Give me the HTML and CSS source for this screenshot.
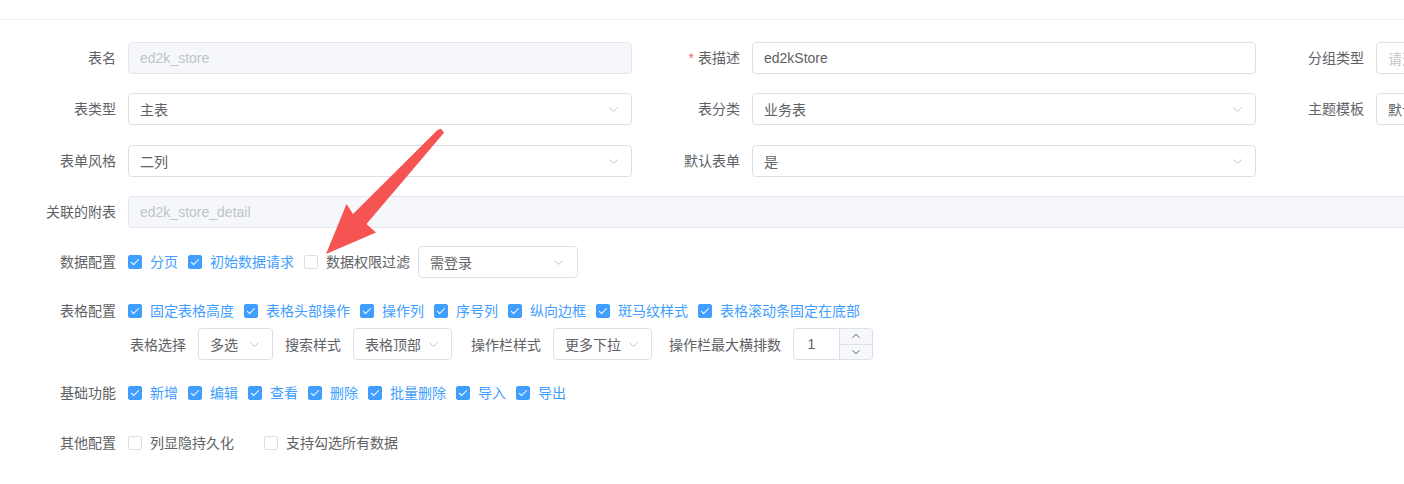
FILE: index.html
```html
<!DOCTYPE html>
<html lang="zh-CN">
<head>
<meta charset="utf-8">
<title>表单配置</title>
<link rel="stylesheet" href="styles.css">
</head>
<body>
<div class="page">
  <div class="topbar"></div>
  <div class="form">
    <div class="grid">
      <div class="item"><label class="lbl">表名</label><div class="ctl disabled">ed2k_store</div></div>
      <div class="item"><label class="lbl"><span class="req">*</span>表描述</label><div class="ctl">ed2kStore</div></div>
      <div class="item"><label class="lbl">分组类型</label><div class="ctl select"><span class="val placeholder">请选择分组类型</span><svg class="chev" viewBox="0 0 9 5"><path d="M0.4 0.4 L4.5 4.5 L8.6 0.4" fill="none" stroke="#c0c4cc" stroke-width="1"/></svg></div></div>

      <div class="item"><label class="lbl">表类型</label><div class="ctl select"><span class="val">主表</span><svg class="chev" viewBox="0 0 9 5"><path d="M0.4 0.4 L4.5 4.5 L8.6 0.4" fill="none" stroke="#c0c4cc" stroke-width="1"/></svg></div></div>
      <div class="item"><label class="lbl">表分类</label><div class="ctl select"><span class="val">业务表</span><svg class="chev" viewBox="0 0 9 5"><path d="M0.4 0.4 L4.5 4.5 L8.6 0.4" fill="none" stroke="#c0c4cc" stroke-width="1"/></svg></div></div>
      <div class="item"><label class="lbl">主题模板</label><div class="ctl select"><span class="val">默认主题模板</span><svg class="chev" viewBox="0 0 9 5"><path d="M0.4 0.4 L4.5 4.5 L8.6 0.4" fill="none" stroke="#c0c4cc" stroke-width="1"/></svg></div></div>

      <div class="item r3"><label class="lbl">表单风格</label><div class="ctl select"><span class="val">二列</span><svg class="chev" viewBox="0 0 9 5"><path d="M0.4 0.4 L4.5 4.5 L8.6 0.4" fill="none" stroke="#c0c4cc" stroke-width="1"/></svg></div></div>
      <div class="item r3"><label class="lbl">默认表单</label><div class="ctl select"><span class="val">是</span><svg class="chev" viewBox="0 0 9 5"><path d="M0.4 0.4 L4.5 4.5 L8.6 0.4" fill="none" stroke="#c0c4cc" stroke-width="1"/></svg></div></div>
      <div class="item r3 empty"></div>
    </div>

    <div class="row row-assoc">
      <label class="lbl">关联的附表</label>
      <div class="ctl disabled">ed2k_store_detail</div>
    </div>

    <div class="row">
      <label class="lbl">数据配置</label>
      <div class="cbs">
        <span class="cb on"><span class="box"></span>分页</span>
        <span class="cb on"><span class="box"></span>初始数据请求</span>
        <span class="cb tight"><span class="box"></span>数据权限过滤</span>
        <div class="ctl select sel-data"><span class="val">需登录</span><svg class="chev" viewBox="0 0 9 5"><path d="M0.4 0.4 L4.5 4.5 L8.6 0.4" fill="none" stroke="#c0c4cc" stroke-width="1"/></svg></div>
      </div>
    </div>

    <div class="row-multi">
      <label class="lbl lbl-line">表格配置</label>
      <div class="lines">
        <div class="line cbs">
          <span class="cb on"><span class="box"></span>固定表格高度</span>
          <span class="cb on"><span class="box"></span>表格头部操作</span>
          <span class="cb on"><span class="box"></span>操作列</span>
          <span class="cb on"><span class="box"></span>序号列</span>
          <span class="cb on"><span class="box"></span>纵向边框</span>
          <span class="cb on"><span class="box"></span>斑马纹样式</span>
          <span class="cb on"><span class="box"></span>表格滚动条固定在底部</span>
        </div>
        <div class="line2">
          <span class="sub-lbl">表格选择</span>
          <div class="ctl select sel-s w75"><span class="val">多选</span><svg class="chev" viewBox="0 0 9 5"><path d="M0.4 0.4 L4.5 4.5 L8.6 0.4" fill="none" stroke="#c0c4cc" stroke-width="1"/></svg></div>
          <span class="sub-lbl">搜索样式</span>
          <div class="ctl select sel-s w99 gap19"><span class="val">表格顶部</span><svg class="chev" viewBox="0 0 9 5"><path d="M0.4 0.4 L4.5 4.5 L8.6 0.4" fill="none" stroke="#c0c4cc" stroke-width="1"/></svg></div>
          <span class="sub-lbl">操作栏样式</span>
          <div class="ctl select sel-s w99 gap17"><span class="val">更多下拉</span><svg class="chev" viewBox="0 0 9 5"><path d="M0.4 0.4 L4.5 4.5 L8.6 0.4" fill="none" stroke="#c0c4cc" stroke-width="1"/></svg></div>
          <span class="sub-lbl">操作栏最大横排数</span>
          <div class="num">
            <span class="num-v">1</span>
            <div class="num-ctrls">
              <span class="num-btn up"><svg class="mini" viewBox="0 0 8 4"><path d="M0.4 3.6 L4 0.4 L7.6 3.6" fill="none" stroke="#606266" stroke-width="1"/></svg></span>
              <span class="num-btn"><svg class="mini" viewBox="0 0 8 4"><path d="M0.4 0.4 L4 3.6 L7.6 0.4" fill="none" stroke="#606266" stroke-width="1"/></svg></span>
            </div>
          </div>
        </div>
      </div>
    </div>

    <div class="row-cb row-basic">
      <label class="lbl lbl-line">基础功能</label>
      <div class="line cbs">
        <span class="cb on"><span class="box"></span>新增</span>
        <span class="cb on"><span class="box"></span>编辑</span>
        <span class="cb on"><span class="box"></span>查看</span>
        <span class="cb on"><span class="box"></span>删除</span>
        <span class="cb on"><span class="box"></span>批量删除</span>
        <span class="cb on"><span class="box"></span>导入</span>
        <span class="cb on"><span class="box"></span>导出</span>
      </div>
    </div>

    <div class="row-cb">
      <label class="lbl lbl-line">其他配置</label>
      <div class="line cbs">
        <span class="cb wide"><span class="box"></span>列显隐持久化</span>
        <span class="cb"><span class="box"></span>支持勾选所有数据</span>
      </div>
    </div>
  </div>

  <svg class="annot" viewBox="0 0 1404 484" width="1404" height="484">
    <polygon points="326,254 346.5,204 353,214 437.5,130 441,128.8 444,132.8 366.5,224 376,232.5" fill="#f65353"/>
  </svg>
</div>
</body>
</html>
```

FILE: styles.css
```css
* {
  box-sizing: border-box;
}

html,
body {
  margin: 0;
  padding: 0;
}

body {
  width: 1404px;
  height: 484px;
  overflow: hidden;
  background: #ffffff;
  font-family: "Liberation Sans", "Noto Sans CJK SC", sans-serif;
  font-size: 14px;
  color: #606266;
}

.page {
  position: relative;
  width: 1404px;
  height: 484px;
  overflow: hidden;
}

.topbar {
  height: 20px;
  border-bottom: 1px solid #ebeef5;
}

.form {
  width: 1880px;
  padding: 22px 0 0 8px;
}

.grid {
  display: grid;
  grid-template-columns: 624px 624px 624px;
  row-gap: 19px;
  margin-bottom: 19px;
}

.item {
  display: flex;
  align-items: center;
  height: 32px;
}

.item.r3 {
  margin-top: 1px;
}

.lbl {
  width: 120px;
  flex: none;
  padding-right: 12px;
  text-align: right;
  line-height: 32px;
  white-space: nowrap;
  color: #606266;
}

.lbl-line {
  line-height: 28px;
}

.req {
  color: #f56c6c;
  margin-right: 4px;
}

.ctl {
  flex: 1;
  min-width: 0;
  height: 32px;
  border: 1px solid #dcdfe6;
  border-radius: 4px;
  padding: 0 11px;
  display: flex;
  align-items: center;
  background: #ffffff;
  color: #606266;
  white-space: nowrap;
  overflow: hidden;
}

.ctl.disabled {
  background: #f5f7fa;
  border-color: #e4e7ed;
  color: #c0c4cc;
}

.val {
  flex: 1;
  min-width: 0;
  overflow: hidden;
  white-space: nowrap;
}

.placeholder {
  color: #c0c4cc;
}

.chev {
  width: 9px;
  height: 5px;
  flex: none;
  margin-right: 2px;
}

.row {
  display: flex;
  align-items: center;
  height: 32px;
  margin-bottom: 19px;
}

.row-assoc {
  margin-bottom: 18px;
}

.cbs {
  display: flex;
  align-items: center;
}

.cb {
  display: inline-flex;
  align-items: center;
  margin-right: 10px;
  white-space: nowrap;
  color: #606266;
  line-height: 20px;
}

.cb.tight {
  margin-right: 8px;
}

.cb.wide {
  margin-right: 30px;
}

.cb .box {
  position: relative;
  width: 14px;
  height: 14px;
  flex: none;
  border: 1px solid #dcdfe6;
  border-radius: 2px;
  background: #ffffff;
  margin-right: 8px;
}

.cb.on {
  color: #409eff;
}

.cb.on .box {
  background: #409eff;
  border-color: #409eff;
}

.cb.on .box::after {
  content: "";
  position: absolute;
  left: 4px;
  top: 1px;
  width: 3px;
  height: 7px;
  box-sizing: content-box;
  border: 1px solid #ffffff;
  border-left: 0;
  border-top: 0;
  transform: rotate(45deg);
}

.sel-data {
  flex: none;
  width: 160px;
  padding-right: 12px;
}

.row-multi {
  display: flex;
  align-items: flex-start;
  margin-bottom: 19px;
}

.lines {
  display: flex;
  flex-direction: column;
}

.line {
  height: 28px;
}

.line2 {
  margin-top: 3px;
  height: 32px;
  display: flex;
  align-items: center;
  padding-left: 2px;
}

.sub-lbl {
  margin-right: 12px;
  white-space: nowrap;
}

.sel-s {
  flex: none;
  margin-right: 12px;
}

.w75 {
  width: 75px;
}

.w99 {
  width: 99px;
}

.gap19 {
  margin-right: 19px;
}

.gap17 {
  margin-right: 17px;
}

.num {
  width: 80px;
  height: 32px;
  flex: none;
  display: flex;
  border: 1px solid #dcdfe6;
  border-radius: 4px;
  overflow: hidden;
  background: #ffffff;
}

.num-v {
  flex: 1;
  text-align: center;
  line-height: 30px;
  padding-right: 10px;
  color: #606266;
}

.num-ctrls {
  width: 33px;
  flex: none;
  display: flex;
  flex-direction: column;
  border-left: 1px solid #dcdfe6;
  background: #f5f7fa;
}

.num-btn {
  flex: 1;
  display: flex;
  align-items: center;
  justify-content: center;
}

.num-btn.up {
  border-bottom: 1px solid #dcdfe6;
}

.mini {
  width: 8px;
  height: 4px;
}

.row-cb {
  display: flex;
  align-items: center;
  height: 28px;
}

.row-basic {
  margin-bottom: 22px;
}

.annot {
  position: absolute;
  left: 0;
  top: 0;
  pointer-events: none;
}
```
